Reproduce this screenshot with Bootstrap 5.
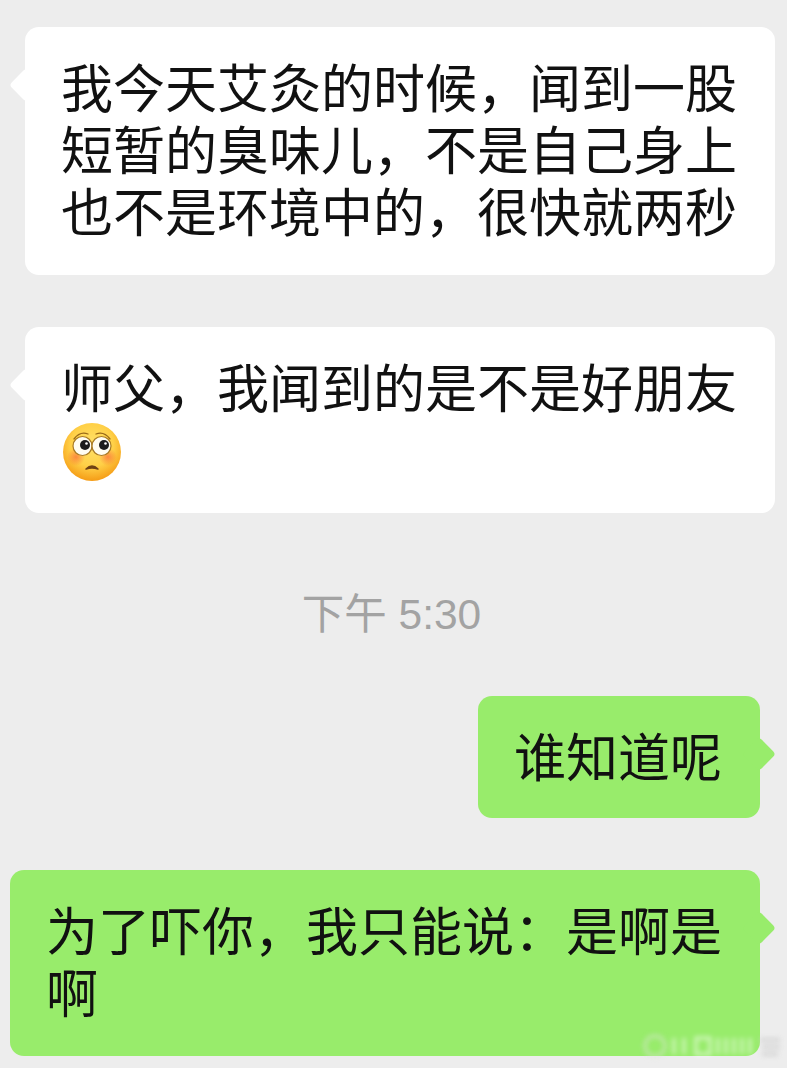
<!DOCTYPE html>
<html lang="zh-CN">

<head>
    <meta charset="UTF-8">
    <meta name="viewport" content="width=device-width, initial-scale=1.0">
    <title>聊天记录</title>
    <link rel="stylesheet" href="https://cdn.jsdelivr.net/npm/bootstrap@5.3.0/dist/css/bootstrap.min.css">
    <style>
        body {
            background: #ededed;
            color: #111;
            font-family: "Noto Sans CJK SC", "Liberation Sans", sans-serif;
            overflow: hidden;
        }

        .chat-page {
            height: 1068px;
            padding-top: 27px;
            gap: 52px;
            position: relative;
        }

        .chat-bubble {
            position: relative;
            width: 750px;
            font-size: 52px;
            line-height: 62px;
            border-radius: 14px;
            padding: 28px 36px 34px;
        }

        .chat-bubble::before {
            content: "";
            position: absolute;
            top: 46px;
            width: 24px;
            height: 24px;
            border-radius: 4px;
            transform: rotate(45deg);
            background: inherit;
        }

        .bubble-in {
            background: #fff;
            margin-left: 25px;
        }

        .bubble-in::before {
            left: -11px;
        }

        .bubble-out {
            background: #98ec6b;
            margin-right: 27px;
        }

        .bubble-out::before {
            right: -11px;
        }

        .bubble-short {
            width: 282px;
            padding-bottom: 32px;
        }

        .chat-time {
            color: #a3a3a3;
            font-family: "Liberation Sans", "Noto Sans CJK SC", sans-serif;
            font-size: 42.5px;
            line-height: 62px;
            margin: 19px 0 -2px;
            padding-right: 4px;
        }

        .face-icon {
            display: block;
            width: 60px;
            height: 60px;
            margin: 5px 0 -3px 1px;
        }

        .mark-blur {
            position: absolute;
            left: 640px;
            top: 1034px;
            filter: blur(2.5px);
        }
    </style>
</head>

<body>
    <div class="chat-page d-flex flex-column">
        <div class="chat-bubble bubble-in">我今天艾灸的时候，闻到一股短暂的臭味儿，不是自己身上也不是环境中的，很快就两秒</div>

        <div class="chat-bubble bubble-in">师父，我闻到的是不是好朋友
            <svg class="face-icon" viewBox="0 0 60 60">
                <defs>
                    <radialGradient id="faceFill" cx="50%" cy="38%" r="62%">
                        <stop offset="0" stop-color="#ffe26a" />
                        <stop offset="0.6" stop-color="#ffd047" />
                        <stop offset="1" stop-color="#f59c16" />
                    </radialGradient>
                    <radialGradient id="cheekFill">
                        <stop offset="0" stop-color="#f96a3a" stop-opacity="0.7" />
                        <stop offset="1" stop-color="#f96a3a" stop-opacity="0" />
                    </radialGradient>
                </defs>
                <circle cx="30" cy="30" r="29" fill="url(#faceFill)" />
                <circle cx="14" cy="35" r="9" fill="url(#cheekFill)" />
                <circle cx="46" cy="35" r="9" fill="url(#cheekFill)" />
                <path d="M12 17q6-8 14-5M34 12q8-3 14 5" fill="none" stroke="#9a6a18" stroke-width="1.3" stroke-linecap="round" />
                <circle cx="20.500" cy="24" r="9.500" fill="#fffdf2" stroke="#a87a24" stroke-width="1.2" />
                <circle cx="39.500" cy="24" r="9.500" fill="#fffdf2" stroke="#a87a24" stroke-width="1.2" />
                <circle cx="23" cy="23" r="5" fill="#1d1d1d" />
                <circle cx="42" cy="23" r="5" fill="#1d1d1d" />
                <circle cx="24.500" cy="21.500" r="1.300" fill="#fff" />
                <circle cx="43.500" cy="21.500" r="1.300" fill="#fff" />
                <path d="M24 47q6-6 12 0q-6-2-12 0z" fill="#6f4214" stroke="#6f4214" stroke-width="1.500" stroke-linejoin="round" />
            </svg>
        </div>

        <div class="chat-time text-center">下午 5:30</div>

        <div class="chat-bubble bubble-out bubble-short align-self-end">谁知道呢</div>

        <div class="chat-bubble bubble-out align-self-end">为了吓你，我只能说：是啊是啊</div>

        <!-- blurred watermark, bottom right -->
        <svg class="mark-blur" width="145" height="28" viewBox="0 0 145 28">
            <g fill="none" stroke="#fff" stroke-opacity="0.6" stroke-width="3">
                <circle cx="15" cy="12" r="10" stroke="#dfe5dc" />
                <path d="M34 4v16M44 4v16M56 4v16h14V4zM78 4v16M86 4v16M94 4v16M102 4v16M110 4v16" />
            </g>
            <path d="M120 6h20M122 13h18M122 20h16" stroke="#cfcfcf" stroke-width="3" />
        </svg>
    </div>

    <script src="https://cdn.jsdelivr.net/npm/bootstrap@5.3.0/dist/js/bootstrap.bundle.min.js"></script>
</body>

</html>
